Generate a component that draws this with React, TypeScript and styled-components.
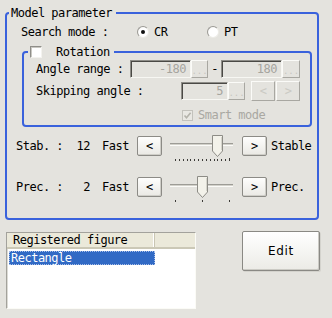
import React from 'react'
import styled, { createGlobalStyle } from 'styled-components'

const BG = '#e4e3de'
const BLUE = '#3a62dc'

const GlobalStyle = createGlobalStyle`
  html, body {
    margin: 0;
    padding: 0;
    background: ${BG};
  }
  body {
    font-family: 'DejaVu Sans Mono', 'Liberation Mono', monospace;
    font-size: 12px;
    letter-spacing: -0.5px;
    color: #000;
  }
`

const Page = styled.div`
  width: 332px;
  height: 318px;
  background: ${BG};
  overflow: hidden;
  display: flex;
  flex-direction: column;
`

const Group = styled.fieldset<{ $margin: string; $pad: string }>`
  margin: ${(p) => p.$margin};
  padding: ${(p) => p.$pad};
  min-width: 0;
  border: 2px solid ${BLUE};
  border-radius: 4px;
`

const Legend = styled.legend<{ $offset: number }>`
  margin-left: ${(p) => p.$offset}px;
  padding: 0 4px 0 2px;
  height: 14px;
  line-height: 14px;
  display: flex;
  align-items: center;
  gap: 14px;
  white-space: pre;
`

const Row = styled.div<{ $top: number; $left: number; $h: number }>`
  display: flex;
  align-items: center;
  height: ${(p) => p.$h}px;
  margin-top: ${(p) => p.$top}px;
  padding-left: ${(p) => p.$left}px;
  white-space: pre;
`

const Label = styled.span<{ $w?: number; $right?: boolean; $muted?: boolean }>`
  display: inline-block;
  flex: none;
  width: ${(p) => (p.$w ? `${p.$w}px` : 'auto')};
  text-align: ${(p) => (p.$right ? 'right' : 'left')};
  color: ${(p) => (p.$muted ? '#a9a8a2' : '#000')};
  line-height: 14px;
`

const RadioItem = styled.label<{ $w: number }>`
  display: flex;
  align-items: center;
  gap: 5px;
  width: ${(p) => p.$w}px;
`

const RadioDot = styled.span<{ $on?: boolean }>`
  position: relative;
  width: 12px;
  height: 12px;
  box-sizing: border-box;
  border-radius: 50%;
  border: 1px solid;
  border-color: #9b9a95 #eeede8 #eeede8 #9b9a95;
  background: radial-gradient(circle at 60% 60%, #ffffff 55%, #e9e8e3 100%);
  &::after {
    content: '';
    display: ${(p) => (p.$on ? 'block' : 'none')};
    position: absolute;
    left: 3px;
    top: 3px;
    width: 4px;
    height: 4px;
    border-radius: 50%;
    background: #111;
  }
`

const CheckBox = styled.span<{ $size: number; $disabled?: boolean }>`
  display: inline-flex;
  align-items: center;
  justify-content: center;
  flex: none;
  width: ${(p) => p.$size}px;
  height: ${(p) => p.$size}px;
  box-sizing: border-box;
  border: 1px solid;
  border-color: ${(p) =>
    p.$disabled ? '#c3c2bc' : '#8f8e89 #f4f3ef #f4f3ef #8f8e89'};
  background: ${(p) => (p.$disabled ? '#e9e8e3' : '#fff')};
  box-shadow: ${(p) => (p.$disabled ? 'none' : 'inset 1px 1px 0 #c9c8c2')};
`

const ValueBox = styled.div<{ $w: number }>`
  width: ${(p) => p.$w}px;
  height: 18px;
  box-sizing: border-box;
  flex: none;
  border: 1px solid;
  border-color: #8e8d88 #f7f7f3 #f7f7f3 #8e8d88;
  box-shadow: inset 1px 1px 0 #4a4945;
  padding-right: 4px;
  text-align: right;
  line-height: 16px;
  color: #a6a59f;
`

const DotsButton = styled.div<{ $w: number }>`
  width: ${(p) => p.$w}px;
  height: 18px;
  box-sizing: border-box;
  flex: none;
  border: 1px solid;
  border-color: #fbfbf8 #a8a7a1 #a8a7a1 #fbfbf8;
  display: flex;
  align-items: flex-end;
  justify-content: center;
  font-size: 9px;
  letter-spacing: 0;
  line-height: 12px;
  color: #c7c6c0;
`

const Dash = styled.span`
  width: 13px;
  text-align: center;
  flex: none;
`

const SpinButton = styled.div`
  width: 24px;
  height: 20px;
  box-sizing: border-box;
  flex: none;
  border: 1px solid;
  border-color: #fbfbf8 #a8a7a1 #a8a7a1 #fbfbf8;
  display: flex;
  align-items: center;
  justify-content: center;
  color: #cbcac4;
  font-size: 12px;
`

const SpinGroup = styled.div`
  display: flex;
  gap: 1px;
  margin-left: 6px;
`

const NavButton = styled.button`
  width: 25px;
  height: 20px;
  flex: none;
  box-sizing: border-box;
  padding: 0;
  border: 1px solid #8c8b86;
  border-radius: 2px;
  background: linear-gradient(#fefefd, #eae9e4);
  box-shadow: inset -1px -1px 0 #cfcec8;
  font-family: inherit;
  font-size: 12px;
  letter-spacing: 0;
  color: #000;
  line-height: 16px;
`

const SliderSvg = styled.svg`
  flex: none;
  display: block;
`

const Gap = styled.span<{ $w: number }>`
  width: ${(p) => p.$w}px;
  flex: none;
`

const Bottom = styled.div`
  display: flex;
  align-items: flex-start;
  margin-top: 11px;
`

const ListBox = styled.div`
  margin: 1px 0 0 6px;
  width: 190px;
  height: 77px;
  box-sizing: border-box;
  background: #fff;
  border: 1px solid;
  border-color: #a3a29c #fbfbf6 #fbfbf6 #a3a29c;
  box-shadow: inset 1px 1px 0 #dcdbd5;
`

const ListHeader = styled.div`
  display: flex;
  height: 16px;
  box-sizing: border-box;
  background: #ebe9da;
  border-bottom: 2px solid #cbc8b6;
`

const HeaderCell = styled.div<{ $w: number }>`
  width: ${(p) => p.$w}px;
  box-sizing: border-box;
  padding-left: 6px;
  line-height: 14px;
  border-right: 1px solid #c9c6b4;
  box-shadow: inset -1px 0 0 #fff;
`

const ListRow = styled.div<{ $selected?: boolean }>`
  margin: 2px 0 0 2px;
  width: 146px;
  height: 14px;
  box-sizing: border-box;
  padding-left: 2px;
  line-height: 14px;
  background: ${(p) => (p.$selected ? '#316ac5' : 'transparent')};
  color: ${(p) => (p.$selected ? '#fff' : '#000')};
  outline: ${(p) => (p.$selected ? '1px dotted #a9bfe8' : 'none')};
  outline-offset: -1px;
`

const EditButton = styled.button`
  margin-left: 46px;
  width: 78px;
  height: 40px;
  box-sizing: border-box;
  border: 1px solid #8a8984;
  border-radius: 2px;
  background: linear-gradient(#ffffff, #ecebe6);
  box-shadow: inset -1px -1px 0 #cbcac4, 1px 1px 0 #d4d3cd;
  font-family: 'DejaVu Sans', 'Liberation Sans', sans-serif;
  font-size: 12px;
  letter-spacing: 0.7px;
  color: #000;
`

const Check = () => (
  <svg width="9" height="9" viewBox="0 0 9 9">
    <path d="M1.5 4.5 L3.5 6.8 L7.6 1.8" fill="none" stroke="#b4b3ab" strokeWidth="1.6" />
  </svg>
)

const Slider = ({ ticks, index }: { ticks: number; index: number }) => {
  const x0 = 13
  const x1 = 67
  const step = (x1 - x0) / (ticks - 1)
  const cx = Math.round(x0 + index * step) + 0.5
  return (
    <SliderSvg width={80} height={32} viewBox="0 0 80 32">
      <rect x={8} y={13} width={63} height={3} fill="#d2d1ca" />
      <line x1={8} y1={13.5} x2={71} y2={13.5} stroke="#9d9c96" />
      <line x1={8} y1={15.5} x2={71} y2={15.5} stroke="#fbfbf8" />
      {Array.from({ length: ticks }, (_, i) => {
        const tx = Math.round(x0 + i * step) + 0.5
        return (
          <line
            key={i}
            x1={tx}
            y1={i === ticks - 1 && ticks > 3 ? 28 : 29}
            x2={tx}
            y2={31}
            stroke="#3c3b38"
          />
        )
      })}
      <path
        d={`M${cx - 5} 5.5 h10 v15.5 l-5 5.5 l-5 -5.5 z`}
        fill="#f3f2ea"
        stroke="#8d8c86"
      />
      <line x1={cx + 4} y1={7} x2={cx + 4} y2={20} stroke="#d6d5cc" />
    </SliderSvg>
  )
}

type SpeedProps = { label: string; value: string; end: string; ticks: number; index: number; top: number }

const SpeedRow = ({ label, value, end, ticks, index, top }: SpeedProps) => (
  <Row $top={top} $left={9} $h={20}>
    <Label $w={60}>{label}</Label>
    <Label $w={14} $right>
      {value}
    </Label>
    <Gap $w={12} />
    <Label $w={35}>Fast</Label>
    <NavButton>&lt;</NavButton>
    <Slider ticks={ticks} index={index} />
    <NavButton>&gt;</NavButton>
    <Gap $w={4} />
    <Label>{end}</Label>
  </Row>
)

export default function App() {
  return (
    <Page>
      <GlobalStyle />
      <Group $margin="6px 13px 0 5px" $pad="0 0 21px 0">
        <Legend $offset={2}>Model parameter</Legend>

        <Row $top={2} $left={14} $h={20}>
          <Label $w={116}>Search mode :</Label>
          <RadioItem $w={70}>
            <RadioDot $on />
            CR
          </RadioItem>
          <RadioItem $w={40}>
            <RadioDot />
            PT
          </RadioItem>
        </Row>

        <Group $margin="3px 5px 0 15px" $pad="0 0 2px 0">
          <Legend $offset={4}>
            <CheckBox $size={12} />
            Rotation
          </Legend>

          <Row $top={1} $left={12} $h={18}>
            <Label $w={94}>Angle range :</Label>
            <ValueBox $w={61}>-180</ValueBox>
            <DotsButton $w={17}>...</DotsButton>
            <Dash>-</Dash>
            <ValueBox $w={61}>180</ValueBox>
            <DotsButton $w={18}>...</DotsButton>
          </Row>

          <Row $top={3} $left={12} $h={20}>
            <Label $w={145}>Skipping angle :</Label>
            <ValueBox $w={47}>5</ValueBox>
            <DotsButton $w={17}>...</DotsButton>
            <SpinGroup>
              <SpinButton>&lt;</SpinButton>
              <SpinButton>&gt;</SpinButton>
            </SpinGroup>
          </Row>

          <Row $top={6} $left={158} $h={16}>
            <CheckBox $size={11} $disabled>
              <Check />
            </CheckBox>
            <Gap $w={5} />
            <Label $muted>Smart mode</Label>
          </Row>
        </Group>

        <SpeedRow label="Stab. :" value="12" end="Stable" ticks={15} index={11} top={9} />
        <SpeedRow label="Prec. :" value="2" end="Prec." ticks={3} index={1} top={21} />
      </Group>

      <Bottom>
        <ListBox>
          <ListHeader>
            <HeaderCell $w={148}>Registered figure</HeaderCell>
          </ListHeader>
          <ListRow $selected>Rectangle</ListRow>
        </ListBox>
        <EditButton>Edit</EditButton>
      </Bottom>
    </Page>
  )
}
